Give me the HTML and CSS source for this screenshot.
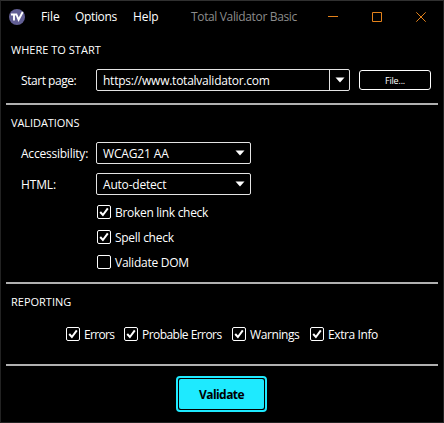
FILE: index.html
```
<!DOCTYPE html>
<html lang="en">
<head>
<meta charset="utf-8">
<title>Total Validator Basic</title>
<link rel="stylesheet" href="styles.css">
</head>
<body>
<svg class="defs" width="0" height="0">
  <symbol id="tick" viewBox="0 0 14 14"><path d="M3.2 7 L5.9 10 L10.8 3.4" fill="none" stroke="#fff" stroke-width="2"/></symbol>
  <symbol id="arrow" viewBox="0 0 10 6"><path d="M.5 .5 H9.5 L5 5.5 Z" fill="#fff"/></symbol>
</svg>
<div class="window">
  <header class="titlebar">
    <svg class="logo" width="16" height="16" viewBox="0 0 16 16"><circle cx="8" cy="8" r="8" fill="#625f94"/><path d="M2 5.5H8.2M5 5.5V11.5M7.6 5.8L9.6 10.8L13.7 3" fill="none" stroke="#fff" stroke-width="1.9"/></svg>
    <nav class="menu"><span class="m-file">File</span><span class="m-options">Options</span><span class="m-help">Help</span></nav>
    <span class="title">Total Validator Basic</span>
    <svg class="controls" width="98" height="10" viewBox="0 0 98 10" fill="none" stroke="#e4821b"><path d="M0 4.5H10M44.5 .5H53.5V9.5H44.5ZM88.3 .3L97.7 9.7M97.7 .3L88.3 9.7"/></svg>
  </header>
  <section class="start">
    <h2 class="h-start">WHERE TO START</h2>
    <div class="row">
      <label class="l-start">Start page:</label>
      <div class="box combo"><span class="url">https://www.totalvalidator.com</span><i class="drop"><svg class="arrow"><use href="#arrow"/></svg></i></div>
      <button class="file">File...</button>
    </div>
  </section>
  <section class="validations">
    <h2 class="h-valid">VALIDATIONS</h2>
    <div class="row"><label class="l-access">Accessibility:</label><div class="box select"><span class="wcag">WCAG21 AA</span><svg class="arrow"><use href="#arrow"/></svg></div></div>
    <div class="row"><label class="l-html">HTML:</label><div class="box select"><span class="auto">Auto-detect</span><svg class="arrow"><use href="#arrow"/></svg></div></div>
    <div class="checks">
      <label class="check c-link"><i class="tickbox"><svg><use href="#tick"/></svg></i><span>Broken link check</span></label>
      <label class="check c-spell"><i class="tickbox"><svg><use href="#tick"/></svg></i><span>Spell check</span></label>
      <label class="check c-dom"><i class="tickbox"></i><span>Validate DOM</span></label>
    </div>
  </section>
  <section class="reporting">
    <h2 class="h-report">REPORTING</h2>
    <div class="reports">
      <label class="check c-errors"><i class="tickbox"><svg><use href="#tick"/></svg></i><span>Errors</span></label>
      <label class="check c-probable"><i class="tickbox"><svg><use href="#tick"/></svg></i><span>Probable Errors</span></label>
      <label class="check c-warn"><i class="tickbox"><svg><use href="#tick"/></svg></i><span>Warnings</span></label>
      <label class="check c-extra"><i class="tickbox"><svg><use href="#tick"/></svg></i><span>Extra Info</span></label>
    </div>
  </section>
  <footer><button class="validate"><span>Validate</span></button></footer>
</div>
</body>
</html>
```

FILE: styles.css
```
* { box-sizing: border-box; }
body { margin: 0; background: #000; }
.defs { position: absolute; }
.window {
  width: 444px; height: 423px; padding: 0 5px;
  border: 1px solid #222; border-top-color: #303030;
  background: #000; color: #fff; overflow: hidden;
  font: 12px/16px "Open Sans", "Noto Sans", sans-serif;
  white-space: nowrap;
}
svg { display: block; flex: none; }
.titlebar { display: flex; align-items: center; height: 31px; padding-left: 3px; }
.logo { margin-right: 16px; }
.menu { display: flex; }
.m-file { width: 34px; letter-spacing: -.1px; }
.m-options { width: 58px; letter-spacing: -.35px; }
.m-help { width: 58px; letter-spacing: -.1px; }
.title { width: 137px; color: #8c8c8c; letter-spacing: -.35px; }
section { border-bottom: 2px solid #b0b0b0; padding-left: 5px; }
.start { height: 73px; padding-top: 10px; }
.validations { height: 179px; padding-top: 10px; }
.reporting { height: 82px; padding-top: 10px; }
h2 { margin: 0; font-size: 11px; font-weight: 400; line-height: 16px; height: 16px; }
.h-start { letter-spacing: .02px; }
.h-valid { letter-spacing: -.08px; }
.row { display: flex; align-items: center; height: 22px; padding-left: 10px; }
.start .row { margin-top: 11px; }
.validations h2 + .row { margin-top: 11px; }
.row + .row { margin-top: 9px; }
.row label { width: 75px; padding-top: 2px; }
.l-start { letter-spacing: -.45px; }
.l-access { letter-spacing: -.22px; }
.l-html { letter-spacing: -.15px; }
.box { display: flex; align-items: center; justify-content: space-between; height: 22px; padding-left: 6px; border: 1px solid #e4e4e4; border-radius: 2px; }
.box span { padding-top: 2px; }
.url { letter-spacing: -.24px; }
.wcag { letter-spacing: -.15px; }
.auto { letter-spacing: -.2px; }
.combo { width: 254px; }
.drop { display: flex; align-items: center; justify-content: center; width: 20px; height: 20px; border-left: 1px solid #e4e4e4; }
.select { width: 155px; padding-right: 5px; }
.arrow { width: 10px; height: 6px; }
button { margin: 0; padding: 0; font-family: inherit; }
.file { width: 72px; height: 20px; margin-left: 9px; padding-top: 1px; border: 1px solid #fff; border-radius: 3px; background: #000; color: #fff; font-size: 9px; line-height: 16px; letter-spacing: -.2px; }
.checks { display: grid; gap: 11px; margin: 10px 0 0 86px; }
.check { display: flex; align-items: center; height: 14px; gap: 4px; }
.check span { padding-top: 2px; }
.tickbox { width: 14px; height: 14px; border: 1px solid #fff; border-radius: 2px; flex: none; }
.tickbox svg { width: 14px; height: 14px; margin: -1px; }
.c-link { letter-spacing: -.3px; }
.c-spell { letter-spacing: -.28px; }
.c-dom { letter-spacing: -.25px; }
.reports { display: flex; margin: 17px 0 0 55px; }
.c-errors { width: 58px; letter-spacing: -.65px; }
.c-probable { width: 108px; letter-spacing: -.55px; }
.c-warn { width: 78px; letter-spacing: -.4px; }
.c-extra { letter-spacing: -.4px; }
footer { display: flex; padding: 10px 0 0 170px; }
.validate { width: 91px; height: 36px; padding: 1px; border: 2px solid #1eeaff; border-radius: 4px; background: #000; color: #000; }
.validate span { display: block; height: 30px; border-radius: 2px; background: #1eeaff; font: 700 12px/32px "Open Sans", sans-serif; letter-spacing: -.55px; }
```
